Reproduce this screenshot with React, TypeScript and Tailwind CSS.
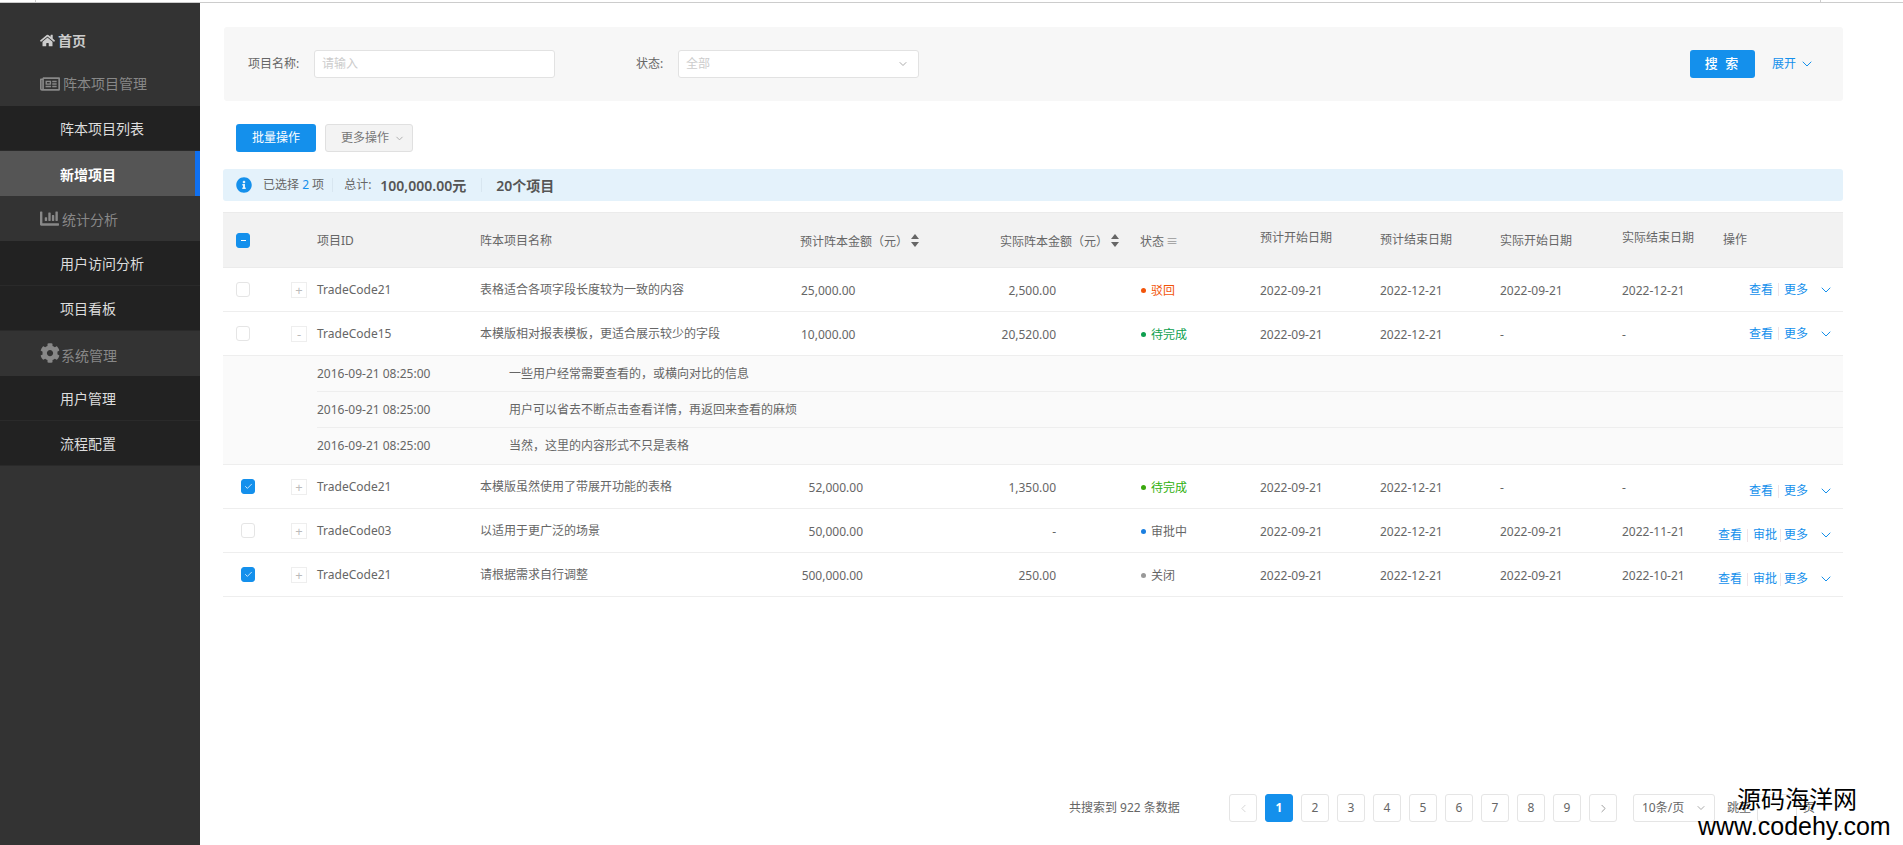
import React from 'react';
import { ChevronDown, ChevronLeft, ChevronRight, Check } from 'lucide-react';
import { FaHome, FaRegNewspaper, FaChartBar, FaCog, FaInfoCircle } from 'react-icons/fa';

const font = { fontFamily: '"Noto Sans", "Noto Sans CJK SC", sans-serif' };

const SortIcon = () => (
    <svg width="8" height="13" viewBox="0 0 8 13" className="mb-[3px] text-[#666]" fill="currentColor">
        <path d="M4 0 L8 5 L0 5 Z" />
        <path d="M0 8 L8 8 L4 13 Z" />
    </svg>
);

const Checkbox = ({ state }: { state: 'off' | 'on' | 'some' }) => (
    <span
        className={`flex h-[15px] w-[14px] items-center justify-center rounded-[3px] border ${
            state === 'off' ? 'border-[#e5e5e5] bg-white' : 'border-[#1490ec] bg-[#1490ec]'
        }`}
    >
        {state === 'on' && <Check size={9} strokeWidth={2} className="text-white" />}
        {state === 'some' && <span className="h-px w-[5px] bg-white" />}
    </span>
);

const SubItem = ({ label, active }: { label: string; active?: boolean }) => (
    <div
        className={`flex h-[45px] items-center pl-[60px] text-[14px] ${
            active
                ? 'border-r-[5px] border-[#1070f0] bg-[#555] pt-[2px] font-bold text-white'
                : 'border-b border-[#2a2a2a] bg-[#222] text-[#ddd]'
        }`}
    >
        {label}
    </div>
);

const GroupItem = ({ icon, label, labelClass }: { icon: React.ReactNode; label: string; labelClass?: string }) => (
    <div className="flex h-[45px] items-center gap-[3px] pl-[40px] text-[14px] text-[#888]">
        {icon}
        <span className={labelClass}>{label}</span>
    </div>
);

const Sidebar = () => (
    <aside className="w-[200px] shrink-0 bg-[#333]">
        <div className="flex h-[58px] items-end gap-[3px] pb-[10px] pl-[40px] text-[14px] font-bold text-[#ccc]">
            <FaHome size={15} className="mb-[3px]" />
            <span>首页</span>
        </div>
        <GroupItem icon={<FaRegNewspaper size={20} />} label="阵本项目管理" />
        <SubItem label="阵本项目列表" />
        <SubItem label="新增项目" active />
        <GroupItem icon={<FaChartBar size={19} />} label="统计分析" labelClass="mt-[2px]" />
        <SubItem label="用户访问分析" />
        <SubItem label="项目看板" />
        <GroupItem icon={<FaCog size={20} className="mb-[1px] mr-[-2px]" />} label="系统管理" labelClass="mt-[4px]" />
        <SubItem label="用户管理" />
        <SubItem label="流程配置" />
    </aside>
);

const SearchPanel = () => (
    <div className="flex h-[74px] items-center rounded-[3px] bg-[#f7f7f7] text-[12px] text-[#666]">
        <span className="ml-[24px] w-[66px]">项目名称:</span>
        <div className="flex h-[28px] w-[241px] items-center rounded-[3px] border border-[#e2e2e2] bg-white pl-[7px] text-[#ccc]">
            请输入
        </div>
        <span className="ml-[81px] w-[42px]">状态:</span>
        <div className="flex h-[28px] w-[241px] items-center justify-between rounded-[3px] border border-[#e2e2e2] bg-white pl-[7px] pr-[9px] text-[#ccc]">
            全部
            <ChevronDown size={12} className="text-[#aaa]" />
        </div>
        <button className="ml-[771px] h-[28px] w-[65px] rounded-[3px] bg-[#1490ec] text-[13px] font-medium tracking-[2px] text-white">
            搜 索
        </button>
        <span className="ml-[17px] text-[#1490ec]">展开</span>
        <ChevronDown size={16} strokeWidth={1.5} className="ml-[3px] text-[#1490ec]" />
    </div>
);

const ActionBar = () => (
    <div className="mt-[23px] flex gap-[9px] pl-[12px] text-[12px]">
        <button className="h-[28px] w-[80px] rounded-[3px] bg-[#1490ec] text-white">批量操作</button>
        <button className="flex h-[28px] w-[88px] items-center gap-[5px] rounded-[3px] border border-[#e0e0e0] bg-[#f3f3f3] pl-[15px] text-[#777]">
            更多操作
            <ChevronDown size={11} className="text-[#aaa]" />
        </button>
    </div>
);

const Alert = () => (
    <div className="-ml-px mt-[17px] flex h-[32px] items-center rounded-[3px] bg-[#e4f2fb] pl-[13px] text-[12px] text-[#666]">
        <FaInfoCircle size={16} className="text-[#1490ec]" />
        <span className="ml-[11px]">
            已选择 <span className="text-[#1490ec]">2</span> 项
        </span>
        <span className="ml-[8px] h-[14px] w-px bg-[#d8e6f0]" />
        <span className="ml-[11px]">总计:</span>
        <span className="ml-[9px] text-[14px] font-semibold text-[#555]">100,000.00元</span>
        <span className="ml-[15px] h-[14px] w-px bg-[#d8e6f0]" />
        <span className="ml-[14px] text-[14px] font-semibold text-[#555]">20个项目</span>
    </div>
);

const TableHead = () => (
    <div className="-ml-px mt-[11px] flex h-[56px] items-center border-y border-[#ebebeb] bg-[#f2f2f2] text-[12px] text-[#666]">
        <div className="w-[94px] pl-[13px]">
            <Checkbox state="some" />
        </div>
        <div className="mt-[2px] w-[163px]">项目ID</div>
        <div className="mt-[2px] w-[320px]">阵本项目名称</div>
        <div className="mt-[4px] flex w-[200px] items-center gap-[3px]">
            预计阵本金额（元）
            <SortIcon />
        </div>
        <div className="mt-[4px] flex w-[140px] items-center gap-[3px]">
            实际阵本金额（元）
            <SortIcon />
        </div>
        <div className="mt-[4px] flex w-[120px] items-center gap-[2px]">
            状态
            <span className="text-[#999]">≡</span>
        </div>
        <div className="mb-[4px] w-[120px]">预计开始日期</div>
        <div className="w-[120px]">预计结束日期</div>
        <div className="mt-[2px] w-[122px]">实际开始日期</div>
        <div className="mb-[4px] w-[101px]">实际结束日期</div>
        <div>操作</div>
    </div>
);

type Row = {
    checked: boolean;
    inset: boolean;
    open?: boolean;
    code: string;
    name: string;
    plan: string;
    planRight: boolean;
    actual: string;
    status: string;
    dot: string;
    statusColor: string;
    start: string;
    end: string;
    realStart: string;
    realEnd: string;
    approve: boolean;
    actionGap: string;
};

const rows: Row[] = [
    { checked: false, inset: false, code: 'TradeCode21', name: '表格适合各项字段长度较为一致的内容', plan: '25,000.00', planRight: false, actual: '2,500.00', status: '驳回', dot: 'bg-[#f2540a]', statusColor: 'text-[#f2540a]', start: '2022-09-21', end: '2022-12-21', realStart: '2022-09-21', realEnd: '2022-12-21', approve: false, actionGap: 'mb-[0px]' },
    { checked: false, inset: false, open: true, code: 'TradeCode15', name: '本模版相对报表模板，更适合展示较少的字段', plan: '10,000.00', planRight: false, actual: '20,520.00', status: '待完成', dot: 'bg-[#0e9f4f]', statusColor: 'text-[#0e9f4f]', start: '2022-09-21', end: '2022-12-21', realStart: '-', realEnd: '-', approve: false, actionGap: 'mb-[0px]' },
    { checked: true, inset: true, code: 'TradeCode21', name: '本模版虽然使用了带展开功能的表格', plan: '52,000.00', planRight: true, actual: '1,350.00', status: '待完成', dot: 'bg-[#3aa80e]', statusColor: 'text-[#2fb00e]', start: '2022-09-21', end: '2022-12-21', realStart: '-', realEnd: '-', approve: false, actionGap: 'mt-[9px]' },
    { checked: false, inset: true, code: 'TradeCode03', name: '以适用于更广泛的场景', plan: '50,000.00', planRight: true, actual: '-', status: '审批中', dot: 'bg-[#1b7fe0]', statusColor: 'text-[#666]', start: '2022-09-21', end: '2022-12-21', realStart: '2022-09-21', realEnd: '2022-11-21', approve: true, actionGap: 'mt-[9px]' },
    { checked: true, inset: true, code: 'TradeCode21', name: '请根据需求自行调整', plan: '500,000.00', planRight: true, actual: '250.00', status: '关闭', dot: 'bg-[#999]', statusColor: 'text-[#666]', start: '2022-09-21', end: '2022-12-21', realStart: '2022-09-21', realEnd: '2022-10-21', approve: true, actionGap: 'mt-[9px]' },
];

const details = [
    '一些用户经常需要查看的，或横向对比的信息',
    '用户可以省去不断点击查看详情，再返回来查看的麻烦',
    '当然，这里的内容形式不只是表格',
];

const Sep = () => <span className="mx-[5px] h-[13px] w-px bg-[#f0e4e8]" />;

const TableRow = ({ row }: { row: Row }) => (
    <div className="-ml-px flex h-[44px] items-center border-b border-[#eeeeee] text-[12px] text-[#666]">
        <div className={`w-[68px] ${row.inset ? 'pl-[18px]' : 'pl-[13px]'}`}>
            <Checkbox state={row.checked ? 'on' : 'off'} />
        </div>
        <div className="mt-[1px] w-[26px]">
            <span className="flex h-[16px] w-[16px] items-center justify-center border border-[#eee] text-[13px] leading-none text-[#bbb]">
                {row.open ? '-' : '+'}
            </span>
        </div>
        <div className="w-[163px]">{row.code}</div>
        <div className="w-[320px]">{row.name}</div>
        <div className={`mt-[2px] w-[200px] ${row.planRight ? 'pr-[137px] text-right' : 'pl-[1px]'}`}>{row.plan}</div>
        <div className="mt-[2px] w-[140px] pr-[84px] text-right">{row.actual}</div>
        <div className="mt-[2px] flex w-[120px] items-center gap-[5px] pl-px">
            <span className={`h-[5px] w-[5px] rounded-full ${row.dot}`} />
            <span className={row.statusColor}>{row.status}</span>
        </div>
        <div className="mt-[3px] w-[120px]">{row.start}</div>
        <div className="mt-[3px] w-[120px]">{row.end}</div>
        <div className="mt-[3px] w-[122px]">{row.realStart}</div>
        <div className="mt-[3px] w-[96px]">{row.realEnd}</div>
        <div className={`flex flex-1 items-center justify-end whitespace-nowrap pr-[9px] text-[#1490ec] ${row.actionGap}`}>
            <span>查看</span>
            <Sep />
            {row.approve && (
                <>
                    <span>审批</span>
                    <span className="mx-[3px] h-[13px] w-px bg-[#f0e4e8]" />
                </>
            )}
            <span>更多</span>
            <ChevronDown size={16} strokeWidth={1.5} className="ml-[10px]" />
        </div>
    </div>
);

const Details = () => (
    <div className="-ml-px border-b border-[#eeeeee] bg-[#fafafa] pl-[94px] text-[12px] text-[#666]">
        {details.map((text, i) => (
            <div
                key={text}
                className={`flex h-[36px] items-center ${i < details.length - 1 ? 'border-b border-[#eeeeee]' : ''}`}
            >
                <span className="w-[192px]">2016-09-21 08:25:00</span>
                <span>{text}</span>
            </div>
        ))}
    </div>
);

const PageBtn = ({ children, active }: { children: React.ReactNode; active?: boolean }) => (
    <span
        className={`flex h-[28px] w-[28px] items-center justify-center rounded-[3px] border text-[12px] ${
            active ? 'border-[#1490ec] bg-[#1490ec] font-bold text-white' : 'border-[#e5e5e5] bg-white text-[#666]'
        }`}
    >
        {children}
    </span>
);

const Pagination = () => (
    <div className="mt-auto mb-[23px] flex items-center pl-[845px] text-[12px] text-[#666]">
        <span className="w-[160px]">共搜索到 922 条数据</span>
        <div className="flex gap-[8px]">
            <PageBtn>
                <ChevronLeft size={13} strokeWidth={1.5} className="text-[#ccc]" />
            </PageBtn>
            <PageBtn active>1</PageBtn>
            {[2, 3, 4, 5, 6, 7, 8, 9].map((n) => (
                <PageBtn key={n}>{n}</PageBtn>
            ))}
            <PageBtn>
                <ChevronRight size={13} strokeWidth={1.5} className="text-[#888]" />
            </PageBtn>
        </div>
        <div className="ml-[16px] flex h-[28px] w-[82px] items-center justify-between rounded-[3px] border border-[#e5e5e5] pl-[8px] pr-[7px]">
            10条/页
            <ChevronDown size={12} className="text-[#aaa]" />
        </div>
        <span className="ml-[12px]">跳至</span>
        <span className="ml-[6px] h-[28px] w-[40px] rounded-[3px] border border-[#e5e5e5]" />
        <span className="ml-[6px]">页</span>
    </div>
);

const Watermark = () => (
    <div
        className="absolute bottom-[6px] right-[7px] w-[198px] text-black"
        style={{ fontFamily: '"Liberation Sans", "Noto Sans CJK SC", sans-serif' }}
    >
        <div className="pl-[39px] text-[24px] leading-[27px]">源码海洋网</div>
        <div className="text-[25px] leading-[26px]">www.codehy.com</div>
    </div>
);

export default function App() {
    return (
        <div className="relative flex h-[845px] w-[1903px] flex-col overflow-hidden bg-white" style={font}>
            <div className="flex h-[3px] shrink-0 border-b border-[#ccc]">
                <span className="ml-[35px] h-full w-px bg-[#ccc]" />
                <span className="ml-[1784px] h-full w-px bg-[#ccc]" />
            </div>
            <div className="flex min-h-0 flex-1">
                <Sidebar />
                <main className="flex flex-1 flex-col pl-[24px] pr-[60px] pt-[24px]">
                    <SearchPanel />
                    <ActionBar />
                    <Alert />
                    <TableHead />
                    <TableRow row={rows[0]} />
                    <TableRow row={rows[1]} />
                    <Details />
                    <TableRow row={rows[2]} />
                    <TableRow row={rows[3]} />
                    <TableRow row={rows[4]} />
                    <Pagination />
                </main>
            </div>
            <Watermark />
        </div>
    );
}
